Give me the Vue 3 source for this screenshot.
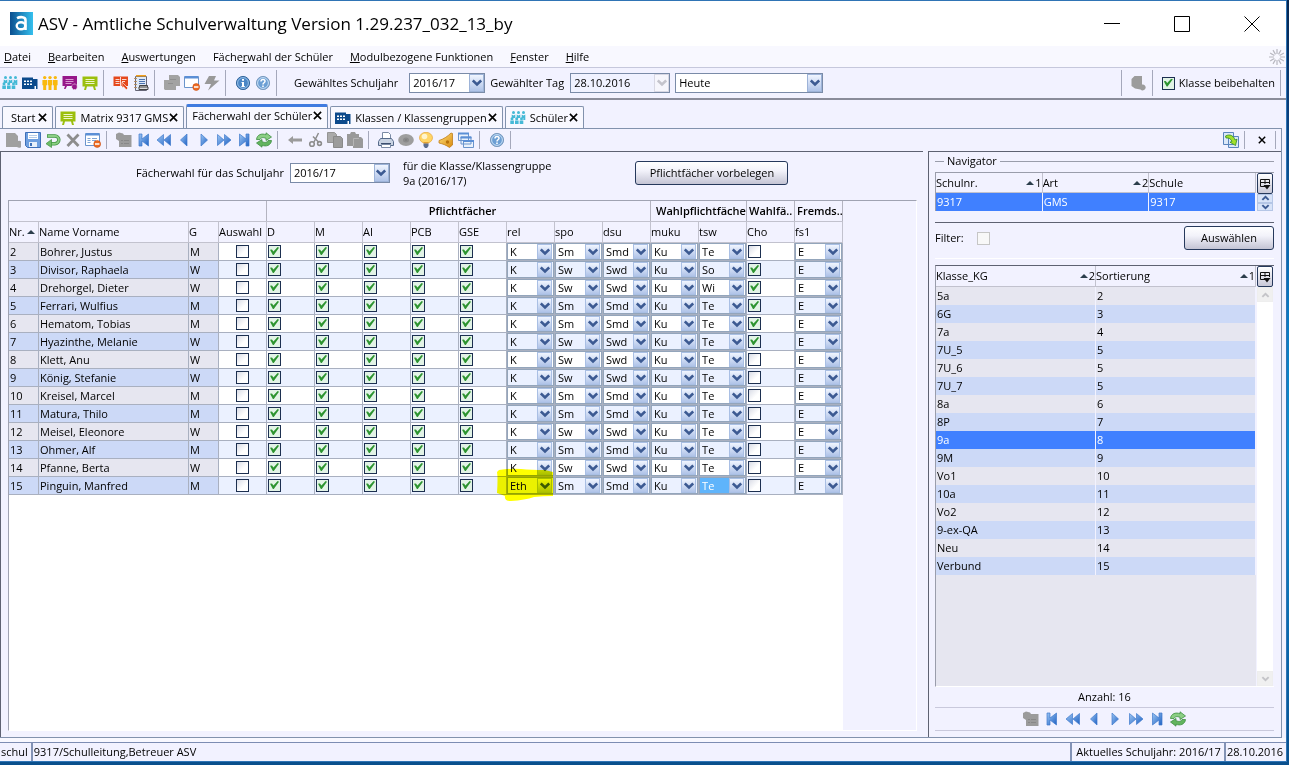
<script setup>
import { ref } from 'vue'

const menus = [
  ['', 'D', 'atei'],
  ['', 'B', 'earbeiten'],
  ['', 'A', 'uswertungen'],
  ['Fäche', 'r', 'wahl der Schüler'],
  ['', 'M', 'odulbezogene Funktionen'],
  ['', 'F', 'enster'],
  ['', 'H', 'ilfe'],
]

const mainTools = [
  ['people-blue', 'school', 'people-yellow', 'board-purple', 'board-green'],
  ['book', 'notebook'],
  ['gray-stack', 'window-minus', 'bolt'],
  ['info', 'help'],
]

const moduleTools = [
  ['gray-doc', 'save', 'undo', 'delete', 'form-minus'],
  ['gray-folder', 'first', 'rewind', 'prev', 'next', 'forward', 'last', 'refresh'],
  ['back', 'cut', 'copy', 'paste'],
  ['print', 'disc', 'bulb', 'horn', 'windows'],
  ['help'],
]

const navTools = ['gray-folder', 'first', 'rewind', 'prev', 'next', 'forward', 'last', 'refresh']

const tabs = [
  { title: 'Start' },
  { title: 'Matrix 9317 GMS', icon: 'board-green' },
  { title: 'Fächerwahl der Schüler', active: true },
  { title: 'Klassen / Klassengruppen', icon: 'school' },
  { title: 'Schüler', icon: 'people-blue' },
]

const required = ['D', 'M', 'AI', 'PCB', 'GSE']

const students = ref(
  [
    [2, 'Bohrer, Justus', 'M', 'K', 'Te', false],
    [3, 'Divisor, Raphaela', 'W', 'K', 'So', true],
    [4, 'Drehorgel, Dieter', 'W', 'K', 'Wi', true],
    [5, 'Ferrari, Wulfius', 'M', 'K', 'Te', true],
    [6, 'Hematom, Tobias', 'M', 'K', 'Te', true],
    [7, 'Hyazinthe, Melanie', 'W', 'K', 'Te', true],
    [8, 'Klett, Anu', 'W', 'K', 'Te', false],
    [9, 'König, Stefanie', 'W', 'K', 'Te', false],
    [10, 'Kreisel, Marcel', 'M', 'K', 'Te', false],
    [11, 'Matura, Thilo', 'M', 'K', 'Te', false],
    [12, 'Meisel, Eleonore', 'W', 'K', 'Te', false],
    [13, 'Ohmer, Alf', 'M', 'K', 'Te', false],
    [14, 'Pfanne, Berta', 'W', 'K', 'Te', false],
    [15, 'Pinguin, Manfred', 'M', 'Eth', 'Te', false],
  ].map(([nr, name, sex, rel, tsw, cho]) => ({
    nr, name, sex, cho,
    picked: false,
    req: required.map(() => true),
    combos: [
      { key: 'rel', value: rel, marked: rel === 'Eth' },
      { key: 'spo', value: sex === 'M' ? 'Sm' : 'Sw' },
      { key: 'dsu', value: sex === 'M' ? 'Smd' : 'Swd' },
      { key: 'muku', value: 'Ku' },
      { key: 'tsw', value: tsw, focused: nr === 15 },
    ],
    fs1: 'E',
  }))
)

const classes = [
  ['5a', 2], ['6G', 3], ['7a', 4], ['7U_5', 5], ['7U_6', 5], ['7U_7', 5],
  ['8a', 6], ['8P', 7], ['9a', 8], ['9M', 9], ['Vo1', 10], ['10a', 11],
  ['Vo2', 12], ['9-ex-QA', 13], ['Neu', 14], ['Verbund', 15],
]
const selectedClass = ref('9a')
const keepClass = ref(true)
</script>

<template>
  <svg class="sprite" aria-hidden="true">
    <defs>
      <linearGradient id="g-blue" x1="0" y1="0" x2="1" y2="1">
        <stop offset="0" stop-color="#9cc6f4" /><stop offset="1" stop-color="#1f62c4" />
      </linearGradient>
      <linearGradient id="g-logo" x1="0" y1="0" x2="1" y2="0">
        <stop offset="0" stop-color="#0b4f8f" /><stop offset="1" stop-color="#35c0ee" />
      </linearGradient>
      <linearGradient id="g-gold" x1="0" y1="0" x2="1" y2="1">
        <stop offset="0" stop-color="#ffe07a" /><stop offset="1" stop-color="#d98a10" />
      </linearGradient>
    </defs>
    <symbol id="people-yellow" viewBox="0 0 16 16">
      <g fill="#f9b90f">
        <circle cx="2.7" cy="2.600" r="1.7" /><circle cx="8" cy="2.600" r="1.7" /><circle cx="13.3" cy="2.600" r="1.7" />
        <path d="M.4 5h4.600v5.200H4.200V15H1.200v-4.800H.4zM5.700 5h4.600v5.200h-.8V15h-3v-4.800h-.8zM11 5h4.600v5.200h-.8V15h-3v-4.800H11z" />
      </g>
    </symbol>
    <symbol id="people-blue" viewBox="0 0 16 16">
      <g fill="#45b9d6">
        <circle cx="3.5" cy="2.500" r="1.5" /><circle cx="8.5" cy="2.500" r="1.5" /><circle cx="13.5" cy="2.500" r="1.5" />
        <path d="M1.700 4.500l1.800 1 1.800-1V8H1.700zM6.700 4.500l1.800 1 1.800-1V8H6.700zM11.700 4.500l1.800 1 1.800-1V10h-2V8h-1.600z" />
        <circle cx="2" cy="8.700" r="1.500" /><circle cx="6.700" cy="8.700" r="1.500" /><circle cx="11.500" cy="8.700" r="1.500" />
        <path d="M.3 10.400h3.600V14H.3zM5 10.400h3.600V14H5zM9.700 10.400h3.600V14H9.700z" />
      </g>
    </symbol>
    <symbol id="school" viewBox="0 0 16 16">
      <path fill="#0c4a8c" d="M0 2.500h11v1.500h4.500v10H0z" />
      <path fill="#fff" d="M2 5.500h2v1.500H2zM5 5.500h2v1.500H5zM8 5.500h2v1.500H8zM2 8.500h2V10H2zM5 8.500h2V10H5zM8 8.500h2V10H8zM12.500 11h1.500v3h-1.500z" />
    </symbol>
    <symbol id="board-purple" viewBox="0 0 16 16">
      <path fill="#96178a" d="M.5 1h14.500v10H.5zM3 11l-1 3h1.500l1.500-3z" />
      <path stroke="#d99ad3" d="M3.500 4.500h8M3.500 6.500h8M3.500 8.500h6" />
      <circle cx="12.500" cy="11.800" r="2.800" fill="#96178a" stroke="#fff" stroke-dasharray="1 1" />
    </symbol>
    <symbol id="board-green" viewBox="0 0 16 16">
      <path fill="#9bbf0e" d="M.5 1.500h15v10H13l1 3.500h-2l-1-3.500H5L4 15H2l1-3.500H.5z" />
      <path stroke="#eef5c9" d="M3.5 4.500h9M3.500 6.500h9M3.500 8.500h9" />
    </symbol>
    <symbol id="book" viewBox="0 0 16 16">
      <path fill="#e5481d" d="M.5 1.500h14.500V11H.5z" />
      <path stroke="#fff" stroke-width=".8" d="M7.500 2v9M2.500 4.500h4M2.500 6.500h4M2.500 8.500h4M9 4.500h4.500M9 6.500h3" />
      <path fill="#e5481d" stroke="#fff" stroke-width=".6" d="M9 7l6 6-1.700 1.700-2.800-3L9 13z" />
    </symbol>
    <symbol id="notebook" viewBox="0 0 16 16">
      <path fill="#dfe9f7" stroke="#667" d="M2.500 1.500h11v14h-11z" />
      <path fill="#f0a020" d="M3 0h10v1.500H3z" />
      <path stroke="#4d74b0" d="M6 4.500h6M6 6.500h6M6 8.500h6" />
      <path stroke="#b28a5a" stroke-width=".9" d="M1 3.500h3M1 6.500h3M1 9.500h3M1 12.500h3" />
      <path fill="#ddd" stroke="#444" d="M6.500 12v-1.500h8V12M6 14.500h9v-2.500H6z" />
    </symbol>
    <symbol id="gray-stack" viewBox="0 0 16 16">
      <path fill="#a3a3a3" d="M5 0h9l2 2v9h-4v4H1l-1-1V5h5z" /><path stroke="#8f8f8f" d="M4 8.500h5M6 4.500h6" />
    </symbol>
    <symbol id="window-minus" viewBox="0 0 16 16">
      <path fill="#fff" stroke="#6a94cc" d="M.5 1.500h14v11H.5z" /><path fill="#5b8fd6" d="M1 1h13v2.500H1z" />
      <circle cx="12.200" cy="12" r="3.400" fill="#ee6c22" stroke="#c84c10" stroke-width=".6" /><path stroke="#fff" stroke-width="1.500" d="M10 12h4.400" />
    </symbol>
    <symbol id="form-minus" viewBox="0 0 16 16">
      <path fill="#fff" stroke="#6a94cc" d="M.5 1.500h14v12H.5z" /><path fill="#5b8fd6" d="M1 1h13v2.500H1z" />
      <path stroke="#7fa5d6" d="M2.500 6.500h3M7 6.500h5M2.500 8.500h3M7 8.500h4M2.500 10.500h3" />
      <circle cx="12.200" cy="12" r="3.400" fill="#ee6c22" stroke="#c84c10" stroke-width=".6" /><path stroke="#fff" stroke-width="1.500" d="M10 12h4.400" />
    </symbol>
    <symbol id="bolt" viewBox="0 0 16 16">
      <path fill="#999" d="M5 1h7l-2 4.500h5.500L4 15.500 7 9H.5z" />
    </symbol>
    <symbol id="info" viewBox="0 0 16 16">
      <circle cx="8" cy="8" r="6.600" fill="#4a86c5" stroke="#37699f" /><circle cx="8" cy="8" r="5.400" fill="none" stroke="#a9cbed" stroke-width=".8" />
      <path fill="#fff" d="M7 4h2v1.800H7zM6.500 7H9v4h.8v1H6.400v-1H7V8h-.5z" />
    </symbol>
    <symbol id="help" viewBox="0 0 16 16">
      <circle cx="8" cy="8" r="6.600" fill="#6c9fd4" stroke="#7c9cc0" /><circle cx="8" cy="8" r="5.400" fill="none" stroke="#d5e6f7" stroke-width=".9" />
      <path fill="none" stroke="#fff" stroke-width="1.500" d="M6 6.500c0-2.600 4-2.600 4-.2C10 7.800 8 7.800 8 9.500" /><path fill="#fff" d="M7.200 10.500h1.600V12H7.200z" />
    </symbol>
    <symbol id="gray-doc" viewBox="0 0 16 16">
      <path fill="#a0a0a0" d="M1 1h9l3 3v5a3.500 3.500 0 1 1-1 6H1z" />
    </symbol>
    <symbol id="save" viewBox="0 0 16 16">
      <path fill="#6f9fe0" stroke="#3e6fb8" d="M.5.500h15v15H2.500l-2-2z" />
      <path fill="#fff" d="M3 1h10v6H3z" /><path stroke="#b5cbe8" d="M4 3.500h8M4 5.500h8" /><path fill="#e9f0fa" d="M4 10h8v5H4z" /><path fill="#3e6fb8" d="M5 11h2v3H5z" />
    </symbol>
    <symbol id="undo" viewBox="0 0 16 16">
      <path fill="none" stroke="#3f9440" stroke-width="3.400" d="M2 4h8a3.800 3.800 0 0 1 0 7.700H6" />
      <path fill="none" stroke="#8bcf84" stroke-width="1.900" d="M2.700 4H10a3.800 3.800 0 0 1 0 7.700H6" /><path fill="#6dbb68" stroke="#3f9440" stroke-width=".7" d="M6.500 7.500v8L1 11.700z" />
    </symbol>
    <symbol id="delete" viewBox="0 0 16 16">
      <path stroke="#8d8d8d" stroke-width="2.800" d="M2.500 2.500l11 11.500M13.500 2.500L2.500 14" />
    </symbol>
    <symbol id="gray-folder" viewBox="0 0 16 16">
      <path fill="#9b9b9b" d="M0 2l3-1.500 4 1 1 1.500h7.500v12H3V9L0 7z" /><path stroke="#888" d="M5 8.500h2M8 8.500h5M5 11.500h2M8 11.500h5" />
    </symbol>
    <symbol id="prev" viewBox="0 0 16 16"><path fill="url(#g-blue)" stroke="#3f7acb" stroke-width=".7" d="M11 2v12L4.500 8z" /></symbol>
    <symbol id="next" viewBox="0 0 16 16"><path fill="url(#g-blue)" stroke="#3f7acb" stroke-width=".7" d="M5 2v12l6.500-6z" /></symbol>
    <symbol id="first" viewBox="0 0 16 16"><path fill="url(#g-blue)" stroke="#3f7acb" stroke-width=".7" d="M3 2h3v5l6.500-5v12L6 9v5H3z" /></symbol>
    <symbol id="last" viewBox="0 0 16 16"><path fill="url(#g-blue)" stroke="#3f7acb" stroke-width=".7" d="M13 2h-3v5L3.500 2v12L10 9v5h3z" /></symbol>
    <symbol id="rewind" viewBox="0 0 16 16"><path fill="url(#g-blue)" stroke="#3f7acb" stroke-width=".7" d="M7.500 2.500v11L1 8zM14.500 2.500v11L8 8z" /></symbol>
    <symbol id="forward" viewBox="0 0 16 16"><path fill="url(#g-blue)" stroke="#3f7acb" stroke-width=".7" d="M8.500 2.500v11L15 8zM1.500 2.500v11L8 8z" /></symbol>
    <symbol id="refresh" viewBox="0 0 16 16">
      <path fill="#8bcf84" stroke="#3f8f42" stroke-width=".8" d="M.5 7.500C1 2.500 6 1 10 2.800V.8L15.500 5 10 8.500V6.300C7 5 4.500 5.500 4 7.500z" />
      <path fill="#62b45e" stroke="#3f8f42" stroke-width=".8" d="M15.500 8.500c-.5 5-5.500 6.500-9.500 4.700v2L.5 11 6 7.500v2.200c3 1.300 5.500.8 6-1.200z" />
    </symbol>
    <symbol id="back" viewBox="0 0 16 16"><path fill="#9b9b9b" d="M1 8l5-4v2.500h9v3H6V12z" /></symbol>
    <symbol id="cut" viewBox="0 0 16 16">
      <path fill="none" stroke="#8d8d8d" stroke-width="1.500" d="M11.500 1L7 10M6 4.500l6 6" /><circle cx="5" cy="12" r="2.300" fill="none" stroke="#8d8d8d" stroke-width="1.600" /><circle cx="12.500" cy="11.500" r="1.900" fill="none" stroke="#8d8d8d" stroke-width="1.600" />
    </symbol>
    <symbol id="copy" viewBox="0 0 16 16">
      <path fill="#aaa" stroke="#949494" d="M.5.500h7l2 2v8h-9z" /><path fill="#9c9c9c" stroke="#8a8a8a" d="M6.500 4.500h7l2 2v9h-9z" />
    </symbol>
    <symbol id="paste" viewBox="0 0 16 16">
      <path fill="#999" d="M0 2h3l1-2h4l1 2h3v3h2l2 2v9H6v-2H0z" /><path stroke="#b5b5b5" d="M6.500 14V6.500H12" fill="none" />
    </symbol>
    <symbol id="print" viewBox="0 0 16 16">
      <path fill="#fff" stroke="#7a8aa5" d="M4.500 7V.500h6l2 2V7" /><path fill="#c9d3e3" stroke="#566a8a" d="M2.500 6.500h11l2 3v4H.5v-4z" /><path stroke="#3c4e6e" d="M3 11.500h10" /><path fill="#fff" stroke="#7a8aa5" d="M3.500 12.500h9v3h-9z" />
    </symbol>
    <symbol id="disc" viewBox="0 0 16 16"><ellipse cx="8" cy="8" rx="7.800" ry="6" fill="#9e9e9e" /><ellipse cx="8" cy="8" rx="3" ry="2.500" fill="#8a8a8a" /><circle cx="8" cy="8" r=".8" fill="#777" /></symbol>
    <symbol id="bulb" viewBox="0 0 16 16">
      <ellipse cx="8" cy="5.800" rx="6.500" ry="5.500" fill="#ffd566" stroke="#e5a433" stroke-width=".7" /><circle cx="6.500" cy="4.500" r="2.800" fill="#fff4cc" /><path fill="#e2a030" d="M5.500 10h5v1.500h-5z" /><path fill="#5c6d8d" d="M5.500 11.500h5V14l-1.500 2H7l-1.500-2z" />
    </symbol>
    <symbol id="horn" viewBox="0 0 16 16">
      <path fill="url(#g-gold)" stroke="#b8730c" stroke-width=".7" d="M13 1l1.500.5V13l-3 2.500C8 13 5 12 1 11V8.500C6 7 10 4 13 1z" /><circle cx="9.500" cy="10" r="1.700" fill="#b8730c" />
    </symbol>
    <symbol id="windows" viewBox="0 0 16 16">
      <g fill="#eaf2fc" stroke="#6a94cc"><path d="M.5 1.500h10v7H.5zM3 5h10v7H3zM5.500 8.500h10v7h-10z" /></g><path stroke="#5b8fd6" stroke-width="2" d="M0 1.500h11M2.500 5.500h11M5 9h11" />
    </symbol>
    <symbol id="gray-cyl" viewBox="0 0 16 16"><path fill="#9c9c9c" d="M.5 4l3-3H11v8.500a3 3 0 1 1-1.500 5L4 13.500.5 11z" /></symbol>
    <symbol id="swap" viewBox="0 0 16 16">
      <path fill="#dbe8f8" stroke="#5a85bd" d="M.5.500h10v12H.5zM5.500 4.500h10v11h-10z" /><path fill="#a2e02c" stroke="#2f8a1e" stroke-width=".8" d="M2.500 4C7 1.500 11 4 12 8l2-.8-1.500 6.300-5.500-3.300 2-.7C8 7 6 5.500 3 6z" />
    </symbol>
    <symbol id="chevron" viewBox="0 0 10 8"><path fill="none" stroke="currentColor" stroke-width="2.600" d="M.8 1.500l4.200 4 4.200-4" /></symbol>
    <symbol id="cross" viewBox="0 0 10 10"><path stroke="#000" stroke-width="1.800" d="M1 1l8 8M9 1L1 9" /></symbol>
    <symbol id="column-config" viewBox="0 0 12 12">
      <path fill="none" stroke="#111" d="M6 8.500H1.500v-7h9V6M1 4.500h9M6 1v5" /><path fill="#111" d="M4.500 7h7L8 11.500z" />
    </symbol>
  </svg>

  <div class="window">
    <header class="titlebar">
      <svg class="logo" viewBox="0 0 23 23" aria-hidden="true">
        <path fill="url(#g-logo)" d="M0 0h23v23H0z" />
        <path fill="none" stroke="#fff" stroke-width="2.600" d="M7 6.200c3-1.600 8.500-1.700 8.500 2V18" />
        <ellipse cx="11" cy="13.800" rx="4.300" ry="3.500" fill="none" stroke="#fff" stroke-width="2.400" />
      </svg>
      <h1>ASV - Amtliche Schulverwaltung Version 1.29.237_032_13_by</h1>
      <div class="caption-buttons">
        <button type="button" aria-label="Minimieren"><svg viewBox="0 0 16 16"><path stroke="#000" d="M0 7.500h16" /></svg></button>
        <button type="button" aria-label="Maximieren"><svg viewBox="0 0 16 16"><path fill="none" stroke="#000" d="M.5.500h15v15H.5z" /></svg></button>
        <button type="button" aria-label="Schließen"><svg viewBox="0 0 16 16"><path stroke="#000" d="M.5.500l15 15M15.500.500l-15 15" /></svg></button>
      </div>
    </header>

    <nav class="menubar">
      <a v-for="m in menus" :key="m[1] + m[2]" href="#">{{ m[0] }}<u>{{ m[1] }}</u>{{ m[2] }}</a>
      <svg class="spinner" viewBox="0 0 16 16" aria-hidden="true">
        <g stroke="#b8b8c0" stroke-width="1.200">
          <path d="M8 0v5M8 11v5M0 8h5M11 8h5M4 1.100l2.500 4.300M9.500 10.600l2.500 4.300M12 1.100L9.500 5.400M6.500 10.600L4 14.900M1.100 4l4.300 2.500M10.600 9.500l4.300 2.500M1.100 12l4.300-2.500M10.600 6.500L14.900 4" />
        </g>
      </svg>
    </nav>

    <div class="toolbar main-toolbar">
      <template v-for="(group, gi) in mainTools" :key="gi">
        <button v-for="icon in group" :key="icon" type="button" class="tool" :aria-label="icon"><svg><use :href="'#' + icon" /></svg></button>
        <i class="sep"></i>
      </template>
      <label class="year-label" for="year">Gewähltes Schuljahr</label>
      <span class="combo year">
        <select id="year"><option>2016/17</option></select>
        <span class="arrow"><svg><use href="#chevron" /></svg></span>
      </span>
      <label class="day-label" for="day">Gewählter Tag</label>
      <span class="combo day disabled">
        <select id="day" disabled><option>28.10.2016</option></select>
        <span class="arrow"><svg><use href="#chevron" /></svg></span>
      </span>
      <span class="combo today">
        <select aria-label="Tag"><option>Heute</option></select>
        <span class="arrow"><svg><use href="#chevron" /></svg></span>
      </span>
      <div class="toolbar-end">
        <i class="sep"></i>
        <button type="button" class="tool" aria-label="Daten"><svg><use href="#gray-cyl" /></svg></button>
        <i class="sep"></i>
        <label class="keep"><input v-model="keepClass" type="checkbox" class="tick" />Klasse beibehalten</label>
        <i class="sep last"></i>
      </div>
    </div>

    <div class="workspace">
      <div class="tabs">
        <div v-for="t in tabs" :key="t.title" class="tab" :class="{ active: t.active }">
          <svg v-if="t.icon" class="tab-icon"><use :href="'#' + t.icon" /></svg>
          <span>{{ t.title }}</span>
          <button type="button" aria-label="Tab schließen"><svg><use href="#cross" /></svg></button>
        </div>
      </div>

      <div class="frame">
        <div class="toolbar module-toolbar">
          <template v-for="(group, gi) in moduleTools" :key="gi">
            <button v-for="icon in group" :key="icon" type="button" class="tool" :aria-label="icon"><svg><use :href="'#' + icon" /></svg></button>
            <i class="sep"></i>
          </template>
          <div class="toolbar-end">
            <button type="button" class="tool" aria-label="Wechseln"><svg><use href="#swap" /></svg></button>
            <i class="sep"></i>
            <button type="button" class="tool close" aria-label="Modul schließen"><svg><use href="#cross" /></svg></button>
            <i class="sep last"></i>
          </div>
        </div>

        <div class="panes">
          <main class="editor">
            <div class="filter-row">
              <label for="choice-year">Fächerwahl für das Schuljahr</label>
              <span class="combo choice">
                <select id="choice-year"><option>2016/17</option></select>
                <span class="arrow"><svg><use href="#chevron" /></svg></span>
              </span>
              <p>für die Klasse/Klassengruppe<br />9a (2016/17)</p>
              <button type="button" class="push preset">Pflichtfächer vorbelegen</button>
            </div>

            <div class="grid-area">
              <div class="grid-body">
                <table class="subjects">
                  <colgroup>
                    <col class="c-nr" /><col class="c-name" /><col class="c-sex" /><col class="c-pick" />
                    <col v-for="n in 12" :key="n" class="c-sub" />
                  </colgroup>
                  <thead>
                    <tr class="groups">
                      <th colspan="4"></th>
                      <th colspan="8" class="center">Pflichtfächer</th>
                      <th colspan="2">Wahlpflichtfäche</th>
                      <th>Wahlfä..</th>
                      <th>Fremds..</th>
                    </tr>
                    <tr class="names">
                      <th>Nr.<i class="asc"></i></th>
                      <th>Name Vorname</th><th>G</th><th>Auswahl</th>
                      <th v-for="s in required" :key="s">{{ s }}</th>
                      <th>rel</th><th>spo</th><th>dsu</th><th>muku</th><th>tsw</th><th>Cho</th><th>fs1</th>
                    </tr>
                  </thead>
                  <tbody>
                    <tr v-for="s in students" :key="s.nr">
                      <td class="fixed">{{ s.nr }}</td>
                      <td class="fixed">{{ s.name }}</td>
                      <td class="fixed">{{ s.sex }}</td>
                      <td class="pick"><input v-model="s.picked" type="checkbox" class="tick" :aria-label="'Auswahl ' + s.name" /></td>
                      <td v-for="(r, i) in required" :key="r"><input v-model="s.req[i]" type="checkbox" class="tick" :aria-label="r + ' ' + s.name" /></td>
                      <td v-for="c in s.combos" :key="c.key" class="combo-cell">
                        <span class="combo" :class="{ focused: c.focused }">
                          <select :aria-label="c.key + ' ' + s.name"><option>{{ c.value }}</option></select>
                          <span class="arrow"><svg><use href="#chevron" /></svg></span>
                        </span>
                        <svg v-if="c.marked" class="marker" viewBox="0 0 57 34" aria-hidden="true">
                          <path fill="#ffff00" d="M2 2Q14 0 24 1T48 2L56 4V28Q46 28 37 29Q28 32 14 33Q7 33 8 28L0 25Q1 10 0 4z" />
                        </svg>
                      </td>
                      <td><input v-model="s.cho" type="checkbox" class="tick" :aria-label="'Cho ' + s.name" /></td>
                      <td class="combo-cell">
                        <span class="combo">
                          <select :aria-label="'fs1 ' + s.name"><option>{{ s.fs1 }}</option></select>
                          <span class="arrow"><svg><use href="#chevron" /></svg></span>
                        </span>
                      </td>
                    </tr>
                  </tbody>
                </table>
              </div>
            </div>
          </main>

          <aside class="navigator">
            <h2>Navigator</h2>
            <div class="list schools">
              <table>
                <thead>
                  <tr>
                    <th><span>Schulnr.<b><i class="asc"></i>1</b></span></th>
                    <th><span>Art<b><i class="asc"></i>2</b></span></th>
                    <th><span>Schule</span></th>
                  </tr>
                </thead>
                <tbody><tr class="selected"><td>9317</td><td>GMS</td><td>9317</td></tr></tbody>
              </table>
              <div class="side">
                <button type="button" class="config" aria-label="Spalten"><svg><use href="#column-config" /></svg></button>
                <button type="button" class="mini up" aria-label="Nach oben"><svg><use href="#chevron" /></svg></button>
                <button type="button" class="mini" aria-label="Nach unten"><svg><use href="#chevron" /></svg></button>
              </div>
            </div>

            <div class="filter">
              <label for="filter">Filter:</label>
              <input id="filter" type="checkbox" class="tick off" disabled />
              <button type="button" class="push">Auswählen</button>
            </div>

            <div class="list classes">
              <div class="list-body">
                <table>
                  <thead>
                    <tr>
                      <th><span>Klasse_KG<b><i class="asc"></i>2</b></span></th>
                      <th><span>Sortierung<b><i class="asc"></i>1</b></span></th>
                    </tr>
                  </thead>
                  <tbody>
                    <tr v-for="[name, order] in classes" :key="name" :class="{ selected: name === selectedClass }" @click="selectedClass = name">
                      <td>{{ name }}</td><td>{{ order }}</td>
                    </tr>
                  </tbody>
                </table>
              </div>
              <div class="side">
                <button type="button" class="config" aria-label="Spalten"><svg><use href="#column-config" /></svg></button>
                <div class="track">
                  <button type="button" class="mini up ghost" aria-label="Nach oben"><svg><use href="#chevron" /></svg></button>
                  <button type="button" class="mini ghost" aria-label="Nach unten"><svg><use href="#chevron" /></svg></button>
                </div>
              </div>
            </div>

            <p class="count">Anzahl: 16</p>
            <div class="nav-tools">
              <button v-for="icon in navTools" :key="icon" type="button" class="tool" :aria-label="icon"><svg><use :href="'#' + icon" /></svg></button>
            </div>
          </aside>
        </div>
      </div>
    </div>

    <footer class="status">
      <span>schul</span>
      <span class="grow">9317/Schulleitung,Betreuer ASV</span>
      <span>Aktuelles Schuljahr: 2016/17</span>
      <span>28.10.2016</span>
    </footer>
  </div>
</template>

<style>
html,
body,
#app {
  height: 100%;
}
body {
  margin: 0;
  background: linear-gradient(#06264f 0%, #0a3f7c 15%, #0b78c0 40%, #1191cf 60%, #0a66ab 85%, #0a4f8c 100%);
}
#app {
  box-sizing: border-box;
  padding: 0 2px 3px 0;
}
</style>

<style scoped>
* {
  box-sizing: border-box;
}
.sprite {
  position: absolute;
  width: 0;
  height: 0;
}
.window {
  display: flex;
  flex-direction: column;
  height: 100%;
  border: solid #2f74b5;
  border-width: 1px 1px 1px 0;
  background: #fff;
  font: 11px/16px "Open Sans", "Noto Sans", sans-serif;
  color: #000;
  overflow: hidden;
  white-space: nowrap;
}
button {
  padding: 0;
  border: 0;
  background: none;
  font: inherit;
  color: inherit;
  line-height: 0;
}
svg {
  display: block;
}
h1,
h2,
p {
  margin: 0;
  font-weight: normal;
}

/* title and menu */
.titlebar {
  display: flex;
  align-items: center;
  height: 45px;
  padding-left: 10px;
}
.logo {
  width: 23px;
  height: 23px;
}
.titlebar h1 {
  margin-left: 5px;
  font-size: 17px;
  line-height: 24px;
}
.caption-buttons {
  display: flex;
  gap: 54px;
  margin-left: auto;
  padding-right: 26px;
}
.caption-buttons svg {
  width: 16px;
  height: 16px;
}
.menubar {
  display: flex;
  align-items: center;
  gap: 17px;
  height: 21px;
  padding: 0 1px 0 4px;
  background: #f8f8ff;
}
.menubar a {
  color: inherit;
  text-decoration: none;
}
.spinner {
  width: 16px;
  height: 16px;
  margin-left: auto;
}

/* toolbars */
.toolbar {
  display: flex;
  align-items: center;
  gap: 4px;
  background: #f2f2ff;
}
.main-toolbar {
  height: 33px;
  padding-left: 2px;
  border-top: 1px solid #c6c8dc;
  border-bottom: 2px solid #8a8c9a;
}
.tool svg {
  width: 16px;
  height: 16px;
}
.sep {
  align-self: stretch;
  width: 1px;
  margin: 2px 5px 2px 1px;
  background: #a5a8bb;
}
.sep.last {
  margin-right: 0;
}
.year-label {
  margin-left: 8px;
}
.toolbar-end {
  display: flex;
  align-items: center;
  align-self: stretch;
  gap: 4px;
  margin-left: auto;
  padding-right: 5px;
}
.keep {
  display: flex;
  align-items: center;
  gap: 4px;
}
.combo {
  position: relative;
  display: flex;
  height: 20px;
  border: 1px solid #7a8ba8;
  background: #fff;
}
.combo select {
  flex: 1;
  min-width: 0;
  width: 100%;
  padding: 0 0 0 3px;
  border: 0;
  border-radius: 0;
  background: transparent;
  appearance: none;
  font: inherit;
  color: #000;
  opacity: 1;
  outline: 0;
}
.arrow {
  position: absolute;
  top: 0;
  right: 0;
  bottom: 0;
  display: flex;
  align-items: center;
  justify-content: center;
  width: 15px;
  border: 1px solid #9db3d8;
  background: linear-gradient(#f0f5ff, #afc3e8);
  color: #3c5a92;
  pointer-events: none;
}
.arrow svg {
  width: 10px;
  height: 8px;
}
.year {
  width: 76px;
  margin-left: 7px;
}
.day-label {
  margin-left: 1px;
}
.day {
  width: 100px;
  margin-left: 2px;
}
.today {
  width: 148px;
  margin-left: 1px;
}
.disabled {
  background: #f0f2ff;
}
.disabled .arrow {
  border-color: #d8d8e4;
  background: #f6f6fc;
  color: #c4c4cc;
}
.tick {
  display: block;
  flex: none;
  width: 13px;
  height: 13px;
  margin: 0;
  border: 1px solid #1c2f50;
  background: linear-gradient(135deg, #d9dce6, #fff 60%);
  appearance: none;
}
.tick:checked {
  background: #e2f3e6;
}
.tick:checked::after {
  content: "";
  display: block;
  width: 9px;
  height: 8px;
  margin: 1px;
  background: #2d9430;
  clip-path: polygon(0 35%, 22% 30%, 38% 55%, 85% 0, 100% 10%, 42% 100%, 32% 100%);
}
.tick.off {
  border-color: #c6c6c6;
  background: #f8f8f8;
}

/* tabs */
.workspace {
  display: flex;
  flex: 1;
  flex-direction: column;
  min-height: 0;
  padding-top: 4px;
  background: #f2f2ff;
  border-bottom: 4px solid #f8f8ff;
}
.tabs {
  display: flex;
  align-items: flex-end;
  gap: 2px;
  padding-left: 2px;
}
.tab {
  display: flex;
  align-items: center;
  gap: 1px;
  height: 22px;
  padding: 0 5px 0 8px;
  border: 1px solid #8292ad;
  border-bottom: 0;
  border-radius: 2px 2px 0 0;
  background: #f8f8ff;
}
.tab:first-child {
  gap: 3px;
}
.tab-icon {
  width: 16px;
  height: 16px;
  margin: 0 3px 0 -4px;
}
.tab button svg {
  width: 9px;
  height: 9px;
}
.tab.active {
  height: 24px;
  padding: 0 5px 4px;
  border-top: 3px solid #3f7be0;
}
.frame {
  display: flex;
  flex: 1;
  flex-direction: column;
  min-height: 0;
  margin-right: 4px;
  border: solid #8292ad;
  border-width: 1px 1px 1px 0;
}
.module-toolbar {
  height: 22px;
  padding-left: 5px;
}
.close svg {
  width: 8px;
  height: 8px;
  margin: 0 4px;
}

/* editor */
.panes {
  display: flex;
  flex: 1;
  gap: 5px;
  min-height: 0;
}
.editor {
  display: flex;
  flex: 1;
  flex-direction: column;
  min-width: 0;
  padding: 0 6px 6px 7px;
  border: solid #5e6272;
  border-width: 1px 0 0 1px;
}
.filter-row {
  display: flex;
  align-items: center;
  height: 48px;
  padding: 0 0 6px 128px;
}
.choice {
  width: 100px;
  margin-left: 6px;
}
.filter-row p {
  margin-left: 13px;
  line-height: 15px;
}
.push {
  height: 24px;
  border: 1px solid #26395c;
  border-radius: 3px;
  background: linear-gradient(#fff, #f2f2fa 40%, #c4c4d4);
  line-height: 20px;
}
.preset {
  width: 153px;
  margin-left: 84px;
}
.grid-area {
  flex: 1;
  min-height: 0;
  border: 1px solid #a0a3b2;
  border-right-color: #fff;
  border-bottom-color: #fff;
}
.grid-body {
  width: 834px;
  height: 100%;
  background: #fff;
}
table {
  width: 100%;
  border-spacing: 0;
  table-layout: fixed;
}
th,
td {
  padding: 0;
  text-align: left;
  font-weight: normal;
  overflow: hidden;
}
.c-nr,
.c-sex {
  width: 30px;
}
.c-name {
  width: 150px;
}
.c-pick,
.c-sub {
  width: 48px;
}
.groups th {
  height: 20px;
  padding-left: 2px;
  border-right: 1px solid #b4b4c0;
  background: #f2f2ff;
  font-weight: 600;
}
.groups th.center {
  padding-left: 8px;
  text-align: center;
}
.groups th[colspan="2"] {
  padding-left: 5px;
}
.names th {
  height: 22px;
  border: solid #c2c2ce;
  border-width: 1px 1px 1px 0;
  background: #f2f2ff;
}
.asc {
  display: inline-block;
  margin: 0 1px 2px 2px;
  border: 4px solid transparent;
  border-top: 0;
  border-bottom-color: #2c3e4c;
}
.subjects td {
  height: 18px;
  border: solid #a9b0c0;
  border-width: 0 1px 1px 0;
}
.subjects tbody tr {
  background: #fff;
}
.subjects tbody tr:nth-child(even) {
  background: #ebf1ff;
}
.subjects .fixed {
  padding-left: 1px;
  background: #e6e6f0;
}
.subjects tr:nth-child(even) .fixed {
  background: #ccd9f7;
}
.subjects .tick {
  margin-left: 1px;
}
.subjects .pick {
  padding-left: 16px;
}
.subjects .combo-cell {
  position: relative;
  overflow: visible;
}
.combo-cell .combo {
  height: 17px;
  border: 1px solid #93a5bb;
  background: transparent;
}
.combo-cell .combo select {
  padding-left: 2px;
}
.combo-cell .arrow {
  top: 0;
  right: 1px;
  bottom: 0;
  border-color: #a9bfe4;
}
.focused select {
  margin-right: 16px;
  background: #5fb4fb;
  color: #fff;
}
.marker {
  position: absolute;
  top: -9px;
  left: -10px;
  width: 57px;
  height: 34px;
  mix-blend-mode: multiply;
  pointer-events: none;
}

/* navigator */
.navigator {
  display: flex;
  flex: none;
  flex-direction: column;
  width: 353px;
  padding: 0 7px 6px 6px;
  border: solid #5e6272;
  border-width: 1px 0 0 1px;
}
.navigator h2 {
  display: flex;
  align-items: center;
  gap: 3px;
  height: 20px;
  padding-bottom: 2px;
  font-size: 11px;
}
.navigator h2::before,
.navigator h2::after {
  content: "";
  width: 9px;
  height: 1px;
  background: #9a9dab;
}
.navigator h2::after {
  flex: 1;
}
.list {
  display: flex;
  border-left: 1px solid #9a9dab;
}
.list.schools {
  border-top: 1px solid #9a9dab;
}
.list table {
  flex: 1;
}
.list th {
  height: 20px;
  border: solid #c2c2ce;
  border-width: 0 1px 1px 0;
}
.list th span {
  display: flex;
  justify-content: space-between;
}
.list th b {
  font-weight: normal;
}
.list td {
  height: 18px;
  padding-left: 1px;
  border-right: 1px solid #f2f2ff;
  background: #e6e6f0;
}
.list tr:nth-child(even) td {
  background: #ccd9f7;
}
.list tr.selected td {
  background: #4080ff;
  color: #fff;
}
.side {
  display: flex;
  flex-direction: column;
  width: 18px;
  padding: 0 1px;
}
.config {
  display: grid;
  flex: none;
  place-items: center;
  height: 21px;
  border: 1px solid #26395c;
  border-radius: 2px;
  background: linear-gradient(#fff, #c8c8d8);
}
.config svg {
  width: 12px;
  height: 12px;
}
.mini {
  display: grid;
  flex: 1;
  place-items: center;
  border: 1px solid #b5c6e6;
  background: #d8e3f8;
  color: #3c5a92;
}
.mini svg {
  width: 9px;
  height: 6px;
}
.mini.up svg {
  transform: rotate(180deg);
}
.mini.ghost {
  flex: none;
  height: 15px;
  border-color: #eee;
  background: #f0f0f0;
  color: #c4c4c8;
}
.track {
  display: flex;
  flex: 1;
  flex-direction: column;
  justify-content: space-between;
  background: #fff;
}
.filter {
  display: flex;
  align-items: center;
  height: 37px;
  margin-top: 11px;
  padding-bottom: 5px;
  border-top: 1px solid #5e6272;
  border-bottom: 1px solid #fff;
}
.filter .tick {
  margin-left: 13px;
}
.filter .push {
  width: 90px;
  margin-left: auto;
}
.list.classes {
  flex: 1;
  min-height: 0;
  margin-top: 6px;
  border-top: 1px solid #5e6272;
  border-bottom: 1px solid #fff;
}
.list.classes th {
  height: 21px;
}
.list-body {
  flex: 1;
  background: #e6e6f0;
}
.list thead th {
  background: #f2f2ff;
}
.count {
  height: 20px;
  line-height: 20px;
  text-align: center;
}
.nav-tools {
  display: flex;
  align-items: center;
  justify-content: center;
  gap: 5px;
  height: 24px;
  border: solid #c9c9dc;
  border-width: 1px 0;
}

/* status line */
.status {
  display: flex;
  gap: 2px;
  height: 19px;
  border-top: 1px solid #7d8db3;
  background: #8292b5;
  line-height: 17px;
}
.status span {
  padding: 0 3px 0 1px;
  background: #f2f2ff;
}
.status .grow {
  flex: 1;
}
.status span:nth-child(3) {
  padding-left: 4px;
}
</style>
